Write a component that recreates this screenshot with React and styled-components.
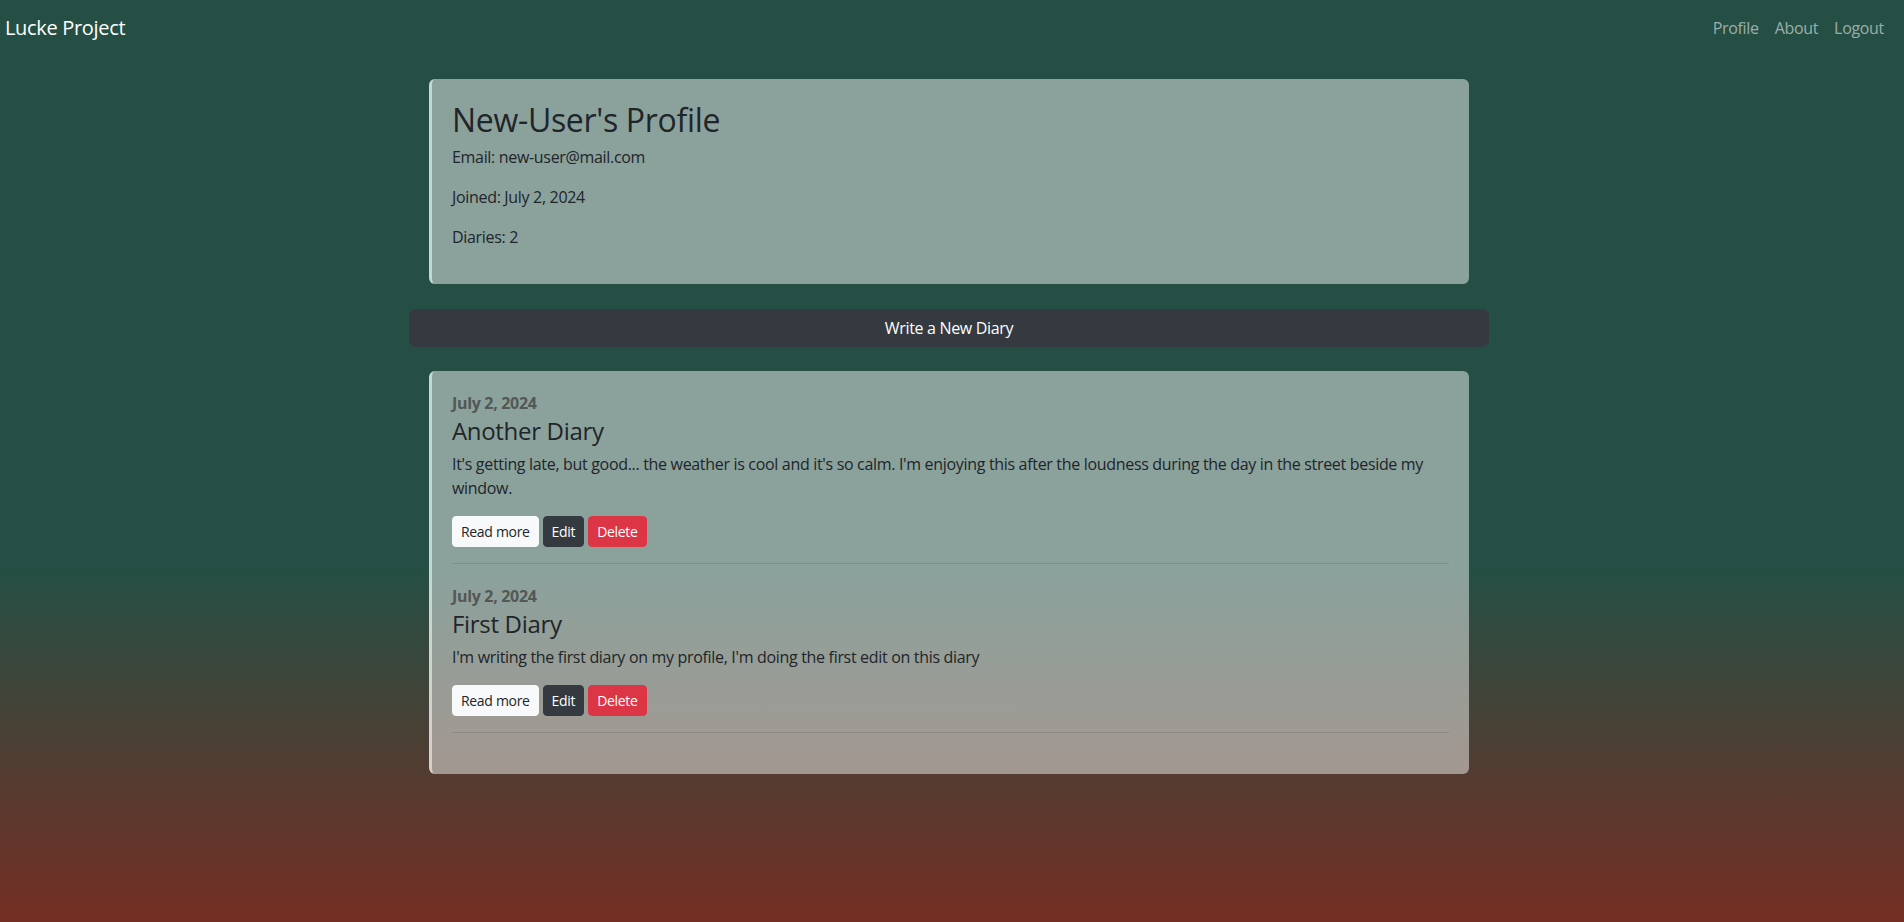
import React from "react";
import styled, { createGlobalStyle } from "styled-components";

const GlobalStyle = createGlobalStyle`
  html, body { margin: 0; padding: 0; }
  body {
    min-height: 100vh;
    font-family: "Open Sans", "Noto Sans", Arial, sans-serif;
    font-size: 16px;
    line-height: 1.5;
    letter-spacing: -0.02em;
    color: #212529;
    background: linear-gradient(to bottom, #254f44 0%, #254f44 62%, #752e23 100%);
    background-attachment: fixed;
  }
  * { box-sizing: border-box; }
`;

const Navbar = styled.nav`
  display: flex;
  align-items: center;
  justify-content: space-between;
  height: 56px;
  padding: 8px 12px 8px 5px;
`;

const Brand = styled.a`
  font-size: 20px;
  line-height: 30px;
  color: #fff;
  text-decoration: none;
`;

const NavList = styled.div`
  display: flex;
`;

const NavLink = styled.a`
  padding: 8px;
  color: rgba(255, 255, 255, 0.55);
  text-decoration: none;
  font-size: 16px;
  line-height: 24px;
`;

const Main = styled.main`
  display: flex;
  flex-direction: column;
  align-items: center;
  padding: 23px 6px 0 0;
`;

const Column = styled.div`
  width: 1080px;
  display: flex;
  flex-direction: column;
  align-items: center;
`;

const Card = styled.section`
  width: 1040px;
  background: rgba(255, 255, 255, 0.47);
  border-left: 3px solid rgba(255, 255, 255, 0.55);
  border-radius: 6px;
  padding: ${(p) => p.$pad};
`;

const ProfileTitle = styled.h2`
  margin: 0 0 6px;
  font-size: 32px;
  font-weight: 500;
  line-height: 1.2;
`;

const Info = styled.p`
  margin: 0 0 16px;
`;

const WriteButton = styled.button`
  width: 100%;
  margin: 25px 0 24px;
  height: 38px;
  padding: 6px 12px;
  font-family: inherit;
  font-size: 16px;
  line-height: 24px;
  letter-spacing: inherit;
  color: #fff;
  background: #343a40;
  border: 1px solid #343a40;
  border-radius: 6px;
`;

const Entry = styled.article`
  display: flex;
  flex-direction: column;
`;

const DateLine = styled.div`
  padding-top: 4px;
  font-weight: 700;
  color: #535756;
  line-height: 24px;
`;

const EntryTitle = styled.h4`
  margin: 2px 0 6px;
  font-size: 24px;
  font-weight: 500;
  line-height: 1.2;
`;

const EntryText = styled.p`
  margin: 0 0 16px;
`;

const Actions = styled.div`
  display: flex;
  gap: 4px;
`;

const variants = {
  light: { bg: "#f8f9fa", fg: "#212529" },
  dark: { bg: "#343a40", fg: "#fff" },
  danger: { bg: "#dc3545", fg: "#fff" },
};

const SmallButton = styled.button`
  padding: 4px 8px;
  font-family: inherit;
  font-size: 14px;
  line-height: 21px;
  letter-spacing: inherit;
  border-radius: 4px;
  border: 1px solid ${(p) => variants[p.$variant].bg};
  background: ${(p) => variants[p.$variant].bg};
  color: ${(p) => variants[p.$variant].fg};
`;

const Divider = styled.hr`
  margin: 16px 0;
  border: 0;
  border-top: 1px solid rgba(0, 0, 0, 0.1);
`;

const diaries = [
  {
    date: "July 2, 2024",
    title: "Another Diary",
    text:
      "It's getting late, but good... the weather is cool and it's so calm. I'm enjoying this after the loudness during the day in the street beside my window.",
  },
  {
    date: "July 2, 2024",
    title: "First Diary",
    text: "I'm writing the first diary on my profile, I'm doing the first edit on this diary",
  },
];

export default function App() {
  return (
    <>
      <GlobalStyle />
      <Navbar>
        <Brand href="#">Lucke Project</Brand>
        <NavList>
          <NavLink href="#">Profile</NavLink>
          <NavLink href="#">About</NavLink>
          <NavLink href="#">Logout</NavLink>
        </NavList>
      </Navbar>
      <Main>
        <Column>
          <Card $pad="22px 20px 19px 20px">
            <ProfileTitle>New-User's Profile</ProfileTitle>
            <Info>Email: new-user@mail.com</Info>
            <Info>Joined: July 2, 2024</Info>
            <Info>Diaries: 2</Info>
          </Card>
          <WriteButton>Write a New Diary</WriteButton>
          <Card $pad="16px 20px 25px 20px">
            {diaries.map((d) => (
              <Entry key={d.title}>
                <DateLine>{d.date}</DateLine>
                <EntryTitle>{d.title}</EntryTitle>
                <EntryText>{d.text}</EntryText>
                <Actions>
                  <SmallButton $variant="light">Read more</SmallButton>
                  <SmallButton $variant="dark">Edit</SmallButton>
                  <SmallButton $variant="danger">Delete</SmallButton>
                </Actions>
                <Divider />
              </Entry>
            ))}
          </Card>
        </Column>
      </Main>
    </>
  );
}
